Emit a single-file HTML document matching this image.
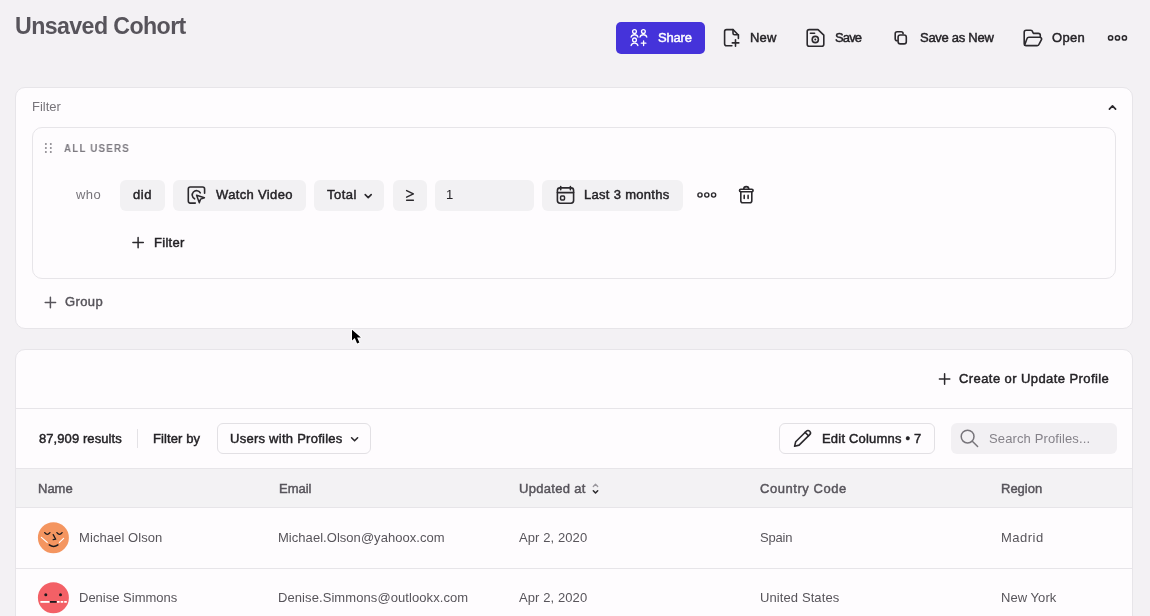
<!DOCTYPE html>
<html><head><meta charset="utf-8">
<style>
*{box-sizing:border-box;margin:0;padding:0}
html,body{width:1150px;height:616px;overflow:hidden;background:#f3f1f4;font-family:"Liberation Sans",sans-serif;color:#242226}
.a{position:absolute;white-space:nowrap;will-change:transform}
.t13{font-size:13px;line-height:16px}
.dk{color:#242226}
.m{-webkit-text-stroke:0.45px currentColor}
.gr{color:#77747a}
svg{position:absolute;overflow:visible}
.card{position:absolute;background:#fefcfe;border:1px solid #e7e5e9;border-radius:10px}
.pill{position:absolute;background:#f2f1f3;border-radius:6px}
</style></head><body>

<!-- Title -->
<div class="a" style="left:15px;top:12.5px;font-size:23.2px;line-height:26px;font-weight:700;color:#57545b;letter-spacing:-0.6px">Unsaved Cohort</div>

<!-- Share button -->
<div style="position:absolute;left:616px;top:22px;width:89px;height:32px;background:#4533da;border-radius:5px"></div>
<div class="a t13 m" style="left:658px;top:30px;color:#fff;letter-spacing:-0.2px">Share</div>

<div class="a t13 m" style="left:749.5px;top:30px;letter-spacing:0.2px">New</div>
<div class="a t13 m" style="left:835px;top:30px;letter-spacing:-0.85px">Save</div>
<div class="a t13 m" style="left:920px;top:30px;letter-spacing:-0.28px">Save as New</div>
<div class="a t13 m" style="left:1052px;top:30px;letter-spacing:0.3px">Open</div>

<!-- Filter card -->
<div class="card" style="left:15px;top:87px;width:1118px;height:242px"></div>
<div class="a t13 gr" style="left:32px;top:99px">Filter</div>
<div class="card" style="left:32px;top:127px;width:1084px;height:152px;border-radius:10px"></div>
<div class="a" style="left:64.4px;top:142px;font-size:11px;line-height:12px;font-weight:700;color:#7d7a81;letter-spacing:1.36px;transform:scaleX(0.885);transform-origin:0 0">ALL USERS</div>
<div class="a t13 gr" style="left:76px;top:187px;letter-spacing:0.4px">who</div>

<div class="pill" style="left:120px;top:180px;width:45px;height:31px"></div>
<div class="a t13 m" style="left:133px;top:187px;letter-spacing:0.6px">did</div>
<div class="pill" style="left:173px;top:180px;width:133px;height:31px"></div>
<div class="a t13 m" style="left:215.5px;top:187px;letter-spacing:0.35px">Watch Video</div>
<div class="pill" style="left:314px;top:180px;width:70px;height:31px"></div>
<div class="a t13 m" style="left:327px;top:187px;letter-spacing:0.5px">Total</div>
<div class="pill" style="left:393px;top:180px;width:34px;height:31px"></div>

<div class="pill" style="left:435px;top:180px;width:99px;height:31px"></div>
<div class="a t13" style="left:446px;top:187px">1</div>
<div class="pill" style="left:542px;top:180px;width:141px;height:31px"></div>
<div class="a t13 m" style="left:584px;top:187px;letter-spacing:0.3px">Last 3 months</div>

<div class="a t13 m" style="left:154px;top:235px;letter-spacing:0.3px">Filter</div>
<div class="a t13 m" style="left:65px;top:294px;color:#57545b;letter-spacing:0.4px">Group</div>

<!-- Results card -->
<div class="card" style="left:15px;top:349px;width:1118px;height:300px"></div>
<div class="a t13 m" style="left:959px;top:371px;letter-spacing:0.42px">Create or Update Profile</div>
<div style="position:absolute;left:16px;top:408px;width:1116px;height:1px;background:#e7e5e9"></div>

<div class="a t13 m" style="left:38.5px;top:431px;letter-spacing:0.08px">87,909 results</div>
<div style="position:absolute;left:137px;top:429px;width:1px;height:19px;background:#e4e2e6"></div>
<div class="a t13 m" style="left:152.8px;top:431px;letter-spacing:0.1px">Filter by</div>
<div style="position:absolute;left:217px;top:423px;width:154px;height:31px;border:1px solid #e2e0e4;border-radius:6px;background:#fefcfe"></div>
<div class="a t13 m" style="left:230px;top:431px;letter-spacing:0.26px">Users with Profiles</div>

<div style="position:absolute;left:779px;top:423px;width:156px;height:31px;border:1px solid #e2e0e4;border-radius:6px;background:#fefcfe"></div>
<div class="a t13 m" style="left:822px;top:431px;letter-spacing:0.2px">Edit Columns • 7</div>
<div style="position:absolute;left:951px;top:423px;width:166px;height:31px;border-radius:6px;background:#f2f0f3"></div>
<div class="a t13" style="left:989px;top:431px;color:#858289;letter-spacing:0.12px">Search Profiles...</div>

<!-- table -->
<div style="position:absolute;left:16px;top:468px;width:1116px;height:40px;background:#f3f2f4;border-top:1px solid #e7e5e9;border-bottom:1px solid #e7e5e9"></div>
<div class="a t13 m" style="left:38px;top:481px;color:#57545b">Name</div>
<div class="a t13 m" style="left:279px;top:481px;color:#57545b">Email</div>
<div class="a t13 m" style="left:519px;top:481px;color:#57545b;letter-spacing:0.3px">Updated at</div>
<div class="a t13 m" style="left:760px;top:481px;color:#57545b;letter-spacing:0.54px">Country Code</div>
<div class="a t13 m" style="left:1001px;top:481px;color:#57545b">Region</div>

<div class="a t13" style="left:79px;top:530px;color:#58555b;letter-spacing:0.08px">Michael Olson</div>
<div class="a t13" style="left:278px;top:530px;color:#58555b;letter-spacing:0.04px">Michael.Olson@yahoox.com</div>
<div class="a t13" style="left:519px;top:530px;color:#58555b;letter-spacing:0.09px">Apr 2, 2020</div>
<div class="a t13" style="left:760px;top:530px;color:#58555b;letter-spacing:-0.2px">Spain</div>
<div class="a t13" style="left:1001px;top:530px;color:#58555b;letter-spacing:0.5px">Madrid</div>
<div style="position:absolute;left:16px;top:568px;width:1116px;height:1px;background:#e7e5e9"></div>
<div class="a t13" style="left:79px;top:590px;color:#58555b">Denise Simmons</div>
<div class="a t13" style="left:278px;top:590px;color:#58555b;letter-spacing:0.08px">Denise.Simmons@outlookx.com</div>
<div class="a t13" style="left:519px;top:590px;color:#58555b;letter-spacing:0.09px">Apr 2, 2020</div>
<div class="a t13" style="left:760px;top:590px;color:#58555b;letter-spacing:0.1px">United States</div>
<div class="a t13" style="left:1001px;top:590px;color:#58555b;letter-spacing:0.05px">New York</div>


<svg width="1150" height="616" viewBox="0 0 1150 616" style="left:0;top:0" fill="none" stroke-linecap="round" stroke-linejoin="round">
<!-- share icon -->
<g stroke="#fff" stroke-width="1.3">
<circle cx="634.5" cy="31.5" r="1.9"/><circle cx="643.4" cy="31.5" r="1.9"/><circle cx="634.5" cy="39.9" r="1.9"/>
<path d="M631.1 37.1a3.5 3.1 0 0 1 6.8 0"/><path d="M640 37.1a3.5 3.1 0 0 1 6.8 0"/><path d="M631.1 45.5a3.5 3.1 0 0 1 6.8 0"/>
<path d="M643.6 40.9v4.6M641.3 43.2h4.6"/>
</g>
<g stroke="#2b292d" stroke-width="1.6">
<!-- new -->
<path d="M731.9 45.7H726.6a2 2 0 0 1-2-2V31.6a2 2 0 0 1 2-2H733L738.4 35V38.4"/>
<path d="M733 29.6v3.6a1.6 1.6 0 0 0 1.6 1.6h3.8"/>
<path d="M735.5 39.7v6.5M732.3 42.9h6.5"/>
<!-- save -->
<path d="M809.2 29.6H818L823.8 35.2V44.2a2 2 0 0 1-2 2H809.2a2 2 0 0 1-2-2V31.6a2 2 0 0 1 2-2Z"/>
<path d="M810.4 33.3h4.2"/>
<circle cx="815.3" cy="39.5" r="3.1"/><circle cx="815.3" cy="39.5" r="1" fill="#2b292d" stroke="none"/>
<!-- copy -->
<path d="M897.2 40.8a2 2 0 0 1-2-2V33.8a2 2 0 0 1 2-2H901.1a2 2 0 0 1 2 2"/>
<rect x="898.1" y="35" width="8.2" height="8.9" rx="2.2"/>
<!-- folder -->
<path d="M1040.3 36.9V35.4a2 2 0 0 0-2-2H1033.4L1032.6 31.9a2 2 0 0 0-1.9-1.6H1026.2a2 2 0 0 0-2 2V43.6a2 2 0 0 0 2 2H1037.2a2 2 0 0 0 1.9-1.5L1041.6 39.4a1.8 1.8 0 0 0-1.7-2.2H1028.9a2 2 0 0 0-1.9 1.4L1024.6 45.3"/>
<!-- more top -->
<circle cx="1110.6" cy="37.9" r="2.1" stroke-width="1.5"/><circle cx="1117.5" cy="37.9" r="2.1" stroke-width="1.5"/><circle cx="1124.4" cy="37.9" r="2.1" stroke-width="1.5"/>
<!-- chevron up -->
<path d="M1109.4 109.1l3.1-3.3 3.1 3.3" stroke-width="1.7"/>
<!-- watch video -->
<path d="M195.3 203.1H190.3a2 2 0 0 1-2-2V189a2 2 0 0 1 2-2H202.6a2 2 0 0 1 2 2V193.3"/>
<path d="M200.3 192.9A4.3 4.3 0 1 0 194.6 198.8"/>
<path d="M196.6 195.3L204.4 197.7L200.6 199.1L199.3 202.8Z" stroke-width="1.5"/>
<!-- total chevron -->
<path d="M365.2 194.6l3 3 3-3" stroke-width="1.6"/>
<!-- >= -->
<path d="M406.6 190.6l6.8 3.3-6.8 3.3M406.6 200.2h6.8" stroke-width="1.4"/>
<!-- calendar -->
<rect x="557.4" y="187.9" width="16.2" height="15.3" rx="2.6"/>
<path d="M557.4 192.6H573.6M560.7 186.5v3.3M570.4 186.5v3.3"/>
<rect x="560.6" y="196.1" width="3.9" height="3.8" rx=".9" stroke-width="1.5"/>
<!-- ooo -->
<circle cx="700" cy="195" r="2.1" stroke-width="1.4"/><circle cx="706.8" cy="195" r="2.1" stroke-width="1.4"/><circle cx="713.6" cy="195" r="2.1" stroke-width="1.4"/>
<!-- trash -->
<rect x="739.5" y="189.3" width="13.6" height="2.5" rx="1.25"/>
<path d="M743.7 189.2a2.5 2.5 0 0 1 5.1 0"/>
<path d="M740.8 191.8V200.7a2 2 0 0 0 2 2H749.8a2 2 0 0 0 2-2V191.8"/>
<path d="M744.2 195.4v3.1M748.1 195.4v3.1"/>
<!-- plus filter -->
<path d="M138.1 237.4v10.4M132.9 242.6h10.4" stroke-width="1.5"/>
<!-- plus create -->
<path d="M944.6 373.8v10.4M939.4 379h10.4" stroke-width="1.5"/>
<!-- dropdown chevron -->
<path d="M351.6 437.8l3 3 3-3" stroke-width="1.6"/>
<!-- pencil -->
<path d="M794.6 446.2L795.7 441.8L806.3 431.2A2.4 2.4 0 0 1 809.7 434.6L799.1 445.1Z"/>
<path d="M805.1 432.4l3.4 3.4"/>
</g>
<!-- plus group -->
<path d="M50.4 297.3v10.4M45.2 302.5h10.4" stroke="#57545b" stroke-width="1.5"/>
<!-- drag handle -->
<g fill="#8a878d"><circle cx="45.9" cy="144" r="1"/><circle cx="50.8" cy="144" r="1"/><circle cx="45.9" cy="148" r="1"/><circle cx="50.8" cy="148" r="1"/><circle cx="45.9" cy="152" r="1"/><circle cx="50.8" cy="152" r="1"/></g>
<!-- search -->
<circle cx="967.6" cy="436.6" r="6.4" stroke="#77747a" stroke-width="1.5"/>
<path d="M972.3 441.3l5.3 5.2" stroke="#77747a" stroke-width="1.5"/>
<!-- sort -->
<path d="M593.3 486.5l2.2-2.2 2.2 2.2" stroke="#9a979d" stroke-width="1.3"/>
<path d="M593.3 490.8l2.2 2.2 2.2-2.2" stroke="#2b292d" stroke-width="1.5"/>
<!-- avatar 1 -->
<circle cx="53.4" cy="537.7" r="15.5" fill="#f49560"/>
<g stroke="#1d1b1e" stroke-width="1.3">
<path d="M44.7 532.6q2.6 3.4 5.2 0M56.9 532.6q2.6 3.4 5.2 0"/>
<path d="M53.2 534.6l2.5 4.6-2.5.4"/>
<path d="M49.3 544.9q4.3 3.2 8.6 0" stroke-width="1.5"/>
</g>
<path d="M41.4 537.4l5.8 5M63.6 538.4l-4.2 4" stroke="#fff" stroke-width="1.2"/>
<!-- avatar 2 -->
<circle cx="53.4" cy="597.7" r="15.5" fill="#f36066"/>
<circle cx="45.8" cy="594.8" r="1.5" fill="#1d1b1e"/><circle cx="60.5" cy="594.8" r="1.5" fill="#1d1b1e"/>
<path d="M40.4 601.9H49.8" stroke="#fff" stroke-width="1.8" stroke-linecap="butt"/><path d="M57 601.9H66.9" stroke="#fff" stroke-width="1.8" stroke-linecap="butt" stroke-dasharray="2.6 1"/>
<path d="M49.8 601.9H56.6" stroke="#1d1b1e" stroke-width="1.8" stroke-linecap="butt"/>
<!-- cursor -->
<path d="M352 329.8V340.6L354.8 338.1L357.1 343.6L359.4 342.6L357.1 337.4H360.9Z" fill="#000" stroke="#fff" stroke-width="1.8" stroke-linejoin="round" paint-order="stroke"/>
</svg>
</body></html>
